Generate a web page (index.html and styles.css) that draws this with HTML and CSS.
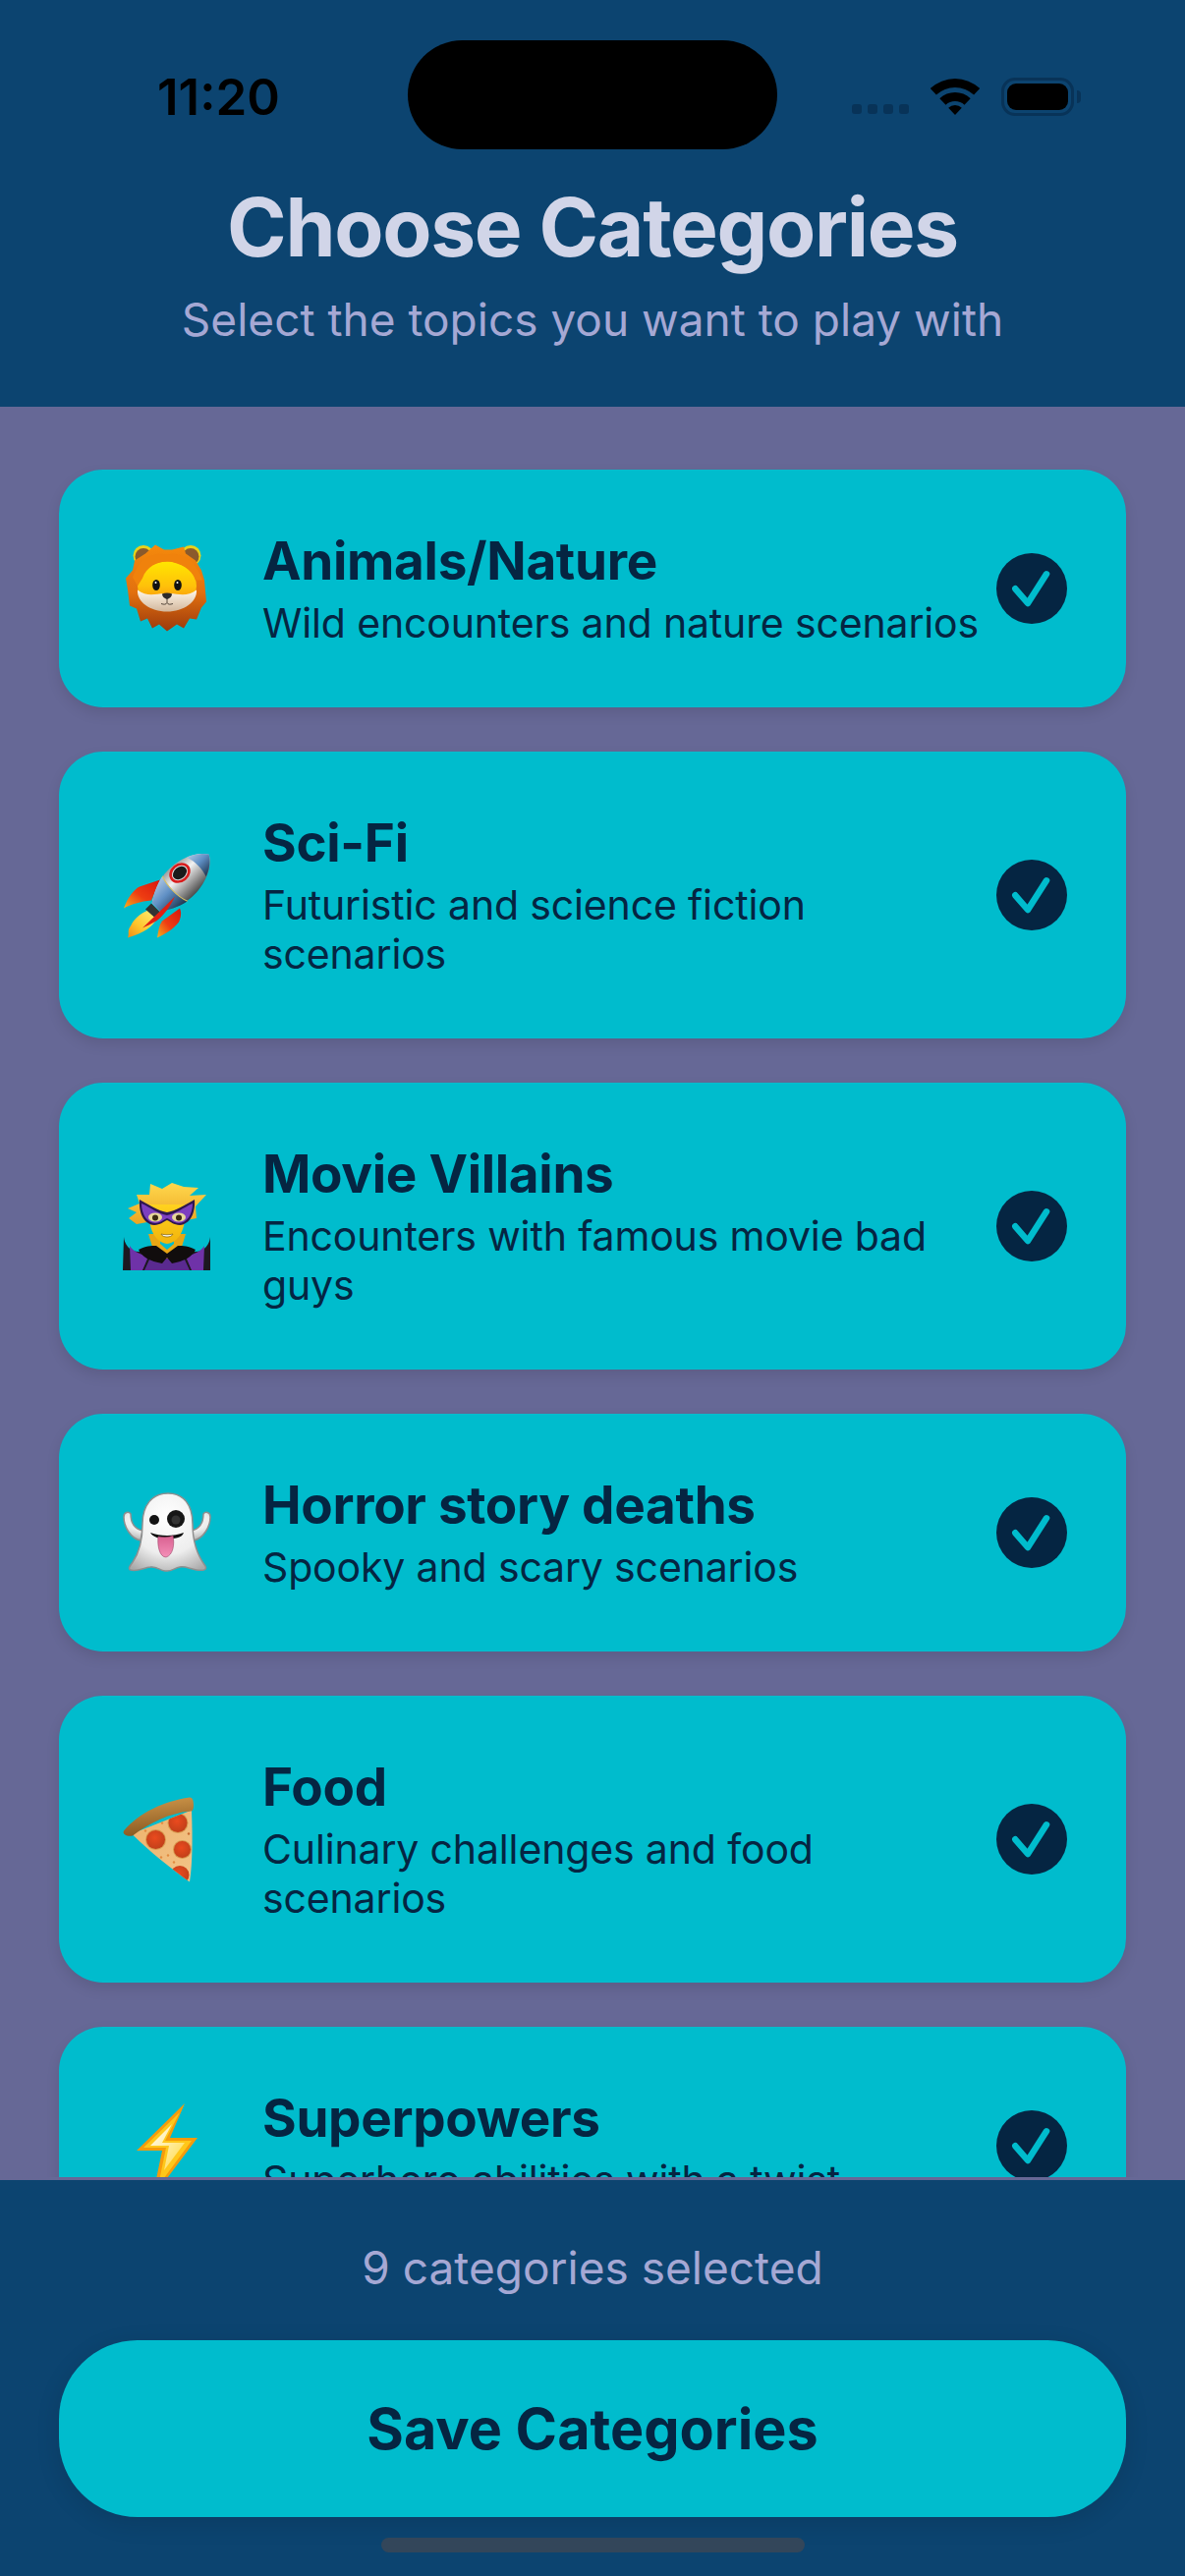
FILE: index.html
```html
<!DOCTYPE html>
<html lang="en">
  <head>
    <meta charset="UTF-8" />
    <meta name="viewport" content="width=device-width, initial-scale=1.0" />
    <title>Choose Categories</title>
    <link rel="stylesheet" href="styles.css">
  </head>
  <body>
    <div class="screen">
      <header class="top">
        <div class="island"></div>
        <div class="status">
          <span class="time">11:20</span>
          <div class="status-icons">
            <div class="signal"><i></i><i></i><i></i><i></i></div>
            <svg class="wifi" width="50" height="37" viewBox="0 0 50 37">
              <path d="M-.2 10A37 37 0 0 1 50.2 10L44.1 16.5A28 28 0 0 0 5.9 16.5Z" />
              <path d="M9.3 20.2A23 23 0 0 1 40.7 20.2L34.5 26.8A14 14 0 0 0 15.5 26.8Z" />
              <path d="M18.2 29.7A10 10 0 0 1 31.8 29.7L25 37Z" />
            </svg>
            <div class="battery"><div class="battery-fill"></div></div>
            <div class="battery-nub"></div>
          </div>
        </div>
        <h1 class="title">Choose Categories</h1>
        <p class="subtitle">Select the topics you want to play with</p>
      </header>

      <main class="list">
        <div class="card">
          <div class="emoji">
            <svg width="110" height="110" viewBox="0 3.5 110 110">
              <defs>
                <linearGradient id="maneG" x1="0" y1="0" x2="0" y2="1">
                  <stop offset="0" stop-color="#f58a0c" />
                  <stop offset=".55" stop-color="#e2700f" />
                  <stop offset="1" stop-color="#9c3a0c" />
                </linearGradient>
                <linearGradient id="faceG" x1="0" y1="0" x2="0" y2="1">
                  <stop offset="0" stop-color="#ffe600" />
                  <stop offset=".5" stop-color="#ffc10a" />
                  <stop offset="1" stop-color="#f57f0e" />
                </linearGradient>
                <linearGradient id="muzzleG" x1="0" y1="0" x2="0" y2="1">
                  <stop offset="0" stop-color="#fff7ea" />
                  <stop offset="1" stop-color="#d2b79c" />
                </linearGradient>
              </defs>
              <circle cx="31" cy="25" r="10.5" fill="#e9d21a" />
              <circle cx="79" cy="25" r="10.5" fill="#e9d21a" />
              <circle cx="31" cy="26" r="8.5" fill="#8a5a2c" />
              <circle cx="79" cy="26" r="8.5" fill="#8a5a2c" />
              <path fill="url(#maneG)" d="M55 102L47 95L40 99L35 89L28 92L24 79L17 76L15 60L13 48L20 40L22 30L33 23L43 14L52 19L60 19L72 16L74 23L84 30L90 40L93 50L95 72L90 78L85 90L78 89L72 99L65 95Z" />
              <ellipse cx="55" cy="56" rx="30" ry="25" fill="url(#faceG)" />
              <path fill="#f0820c" d="M20 47C27 27 42 21 55 24C68 20 85 30 91 50L84 50C80 38 68 33 58 31C48 30 34 35 30 48L25 56Z" />
              <path fill="url(#muzzleG)" d="M25 60C35 68 45 63 55 64C65 63 75 68 85 60C86 72 72 82 55 82C38 82 24 72 25 60Z" />
              <ellipse cx="44" cy="55" rx="3.8" ry="5.5" fill="#111" />
              <ellipse cx="66" cy="55" rx="3.8" ry="5.5" fill="#111" />
              <circle cx="43.5" cy="52.5" r="1" fill="#fff" />
              <circle cx="65.5" cy="52.5" r="1" fill="#fff" />
              <path fill="#2c2a2a" d="M50 64C53 62.5 57 62.5 60 64C60 67 57 69 55 69.5C53 69 50 67 50 64Z" />
              <path fill="none" stroke="#55483c" stroke-width="1" d="M55 69.5V73M49 74C52 75 54 75 55 73C56 75 58 75 61 74" />
            </svg>
          </div>
          <div class="card-text">
            <h3 class="card-title">Animals/Nature</h3>
            <p class="card-desc">Wild encounters and nature scenarios</p>
          </div>
          <div class="check"><svg width="72" height="72" viewBox="0 0 72 72"><polyline points="19.3,36.3 32,51 51,21.3" /></svg></div>
        </div>

        <div class="card">
          <div class="emoji">
            <svg width="110" height="110" viewBox="0 -5.5 110 110">
              <defs>
                <linearGradient id="finG" x1="0" y1="1" x2="1" y2="0">
                  <stop offset="0" stop-color="#f6b21c" />
                  <stop offset=".45" stop-color="#ee3d12" />
                  <stop offset="1" stop-color="#d8160e" />
                </linearGradient>
                <linearGradient id="bodyG" x1="0" y1="0" x2="1" y2="0">
                  <stop offset="0" stop-color="#9e9e9e" />
                  <stop offset=".35" stop-color="#f2f2f2" />
                  <stop offset=".7" stop-color="#9a9a9a" />
                  <stop offset="1" stop-color="#4c4c4c" />
                </linearGradient>
                <linearGradient id="blueG" x1="0" y1="0" x2="1" y2="0">
                  <stop offset="0" stop-color="#a9c4e2" />
                  <stop offset=".45" stop-color="#5f8fc4" />
                  <stop offset="1" stop-color="#1f3550" />
                </linearGradient>
                <linearGradient id="flameG" x1="1" y1="0" x2="0" y2="1">
                  <stop offset="0" stop-color="#fff07a" />
                  <stop offset=".6" stop-color="#fdc52c" />
                  <stop offset="1" stop-color="#f08a14" />
                </linearGradient>
              </defs>
              <path fill="url(#finG)" d="M11 63C15 52 21 44 27 41L48 34L39 55C28 56 18 59 11 63Z" />
              <path fill="url(#flameG)" d="M36 65L45 73C40 82 32 88 15 93C17 88 14 86 18 81C21 74 28 68 36 65Z" />
              <path fill="#333" d="M33 64L39 58L48 67L42 72Z" />
              <g transform="translate(68 38) rotate(45)">
                <path fill="url(#bodyG)" d="M0-42C14-34 20-12 18 4C16 18 10 28 6 34H-6C-10 28-16 18-18 4C-20-12-14-34 0-42Z" />
                <path fill="url(#blueG)" d="M0-42C6-38 11-32 13.8-24C5-27-5-27-13.800-24C-11-32-6-38 0-42Z" />
                <path fill="url(#blueG)" d="M-18 7C-8 11 8 11 18 7C16 18 10 28 6 34H-6C-10 28-16 18-18 7Z" />
                <path fill="none" stroke="#d8c060" stroke-width="1" d="M-18 7C-8 11 8 11 18 7" />
              </g>
              <ellipse cx="68" cy="27" rx="11.500" ry="9.500" fill="#d91c1c" transform="rotate(-40 68 27)" />
              <ellipse cx="68" cy="27" rx="8.800" ry="6.800" fill="#dfe2e4" transform="rotate(-40 68 27)" />
              <ellipse cx="68" cy="27" rx="7.800" ry="5.800" fill="#1a1a1a" transform="rotate(-40 68 27)" />
              <path fill="url(#finG)" d="M45 93C46 86 47 80 50 76L68 63C70 68 69 72 67 77C61 85 53 89 45 93Z" />
              <path fill="#e01f12" d="M30 83L52 62L63 51C58 62 50 72 44 76C39 79 34 81 30 83Z" />
            </svg>
          </div>
          <div class="card-text">
            <h3 class="card-title">Sci-Fi</h3>
            <p class="card-desc">Futuristic and science fiction scenarios</p>
          </div>
          <div class="check"><svg width="72" height="72" viewBox="0 0 72 72"><polyline points="19.3,36.3 32,51 51,21.3" /></svg></div>
        </div>

        <div class="card">
          <div class="emoji">
            <svg width="110" height="110" viewBox="0 -3 110 110">
              <defs>
                <linearGradient id="hairG" x1="0" y1="0" x2="0" y2="1">
                  <stop offset="0" stop-color="#ffd84d" />
                  <stop offset="1" stop-color="#eca521" />
                </linearGradient>
                <linearGradient id="skinG" x1="0" y1="0" x2="0" y2="1">
                  <stop offset="0" stop-color="#ffd21f" />
                  <stop offset="1" stop-color="#f2b40c" />
                </linearGradient>
              </defs>
              <path fill="#1c1820" d="M11 63C12 72 18 78 26 78L84 78C92 78 98 72 99 63L99 97H10Z" />
              <path fill="#6f32a8" d="M17 72C21 78 28 81 36 83L30 97H18ZM93 72C89 78 82 81 74 83L80 97H92Z" />
              <path fill="#5a2a90" d="M32 97L38 84H72L78 97Z" />
              <path fill="url(#hairG)" d="M15 34L27 29L24 20L37 20L38 9L50 14L60 8L72 12L87 13L78 21L95 20L84 32L85 44L75 46L35 48L24 50L16 44L24 38Z" />
              <path fill="#e8a614" d="M36 60H48V70L55 76L62 70V60H74L70 73L82 78L55 85L28 78L40 73Z" />
              <path fill="url(#skinG)" d="M37 30H73C75 50 70 68 55 70C40 68 35 50 37 30Z" />
              <path fill="#110d0d" d="M26 76C33 72 39 72 44 72L55 80L66 72C71 72 77 72 84 76C81 83 72 88 60 90L55 84L50 90C38 88 29 83 26 76Z" />
              <path fill="#2e1650" d="M27 25C36 30 47 37 55 38C63 37 74 30 83 25C84 38 79 50 68 51C62 51 58 47 55 46C52 47 48 51 42 51C31 50 26 38 27 25Z" />
              <path fill="#7d3fc0" d="M29 29C38 33 47 40 55 41C63 40 72 33 81 29C81 40 75 49 67 49C62 49 58 45 55 44C52 45 48 49 43 49C35 49 29 40 29 29Z" />
              <ellipse cx="43" cy="43" rx="7" ry="4.500" fill="#e8d89a" />
              <ellipse cx="67" cy="43" rx="7" ry="4.500" fill="#e8d89a" />
              <circle cx="43" cy="43.500" r="3" fill="#3a2a10" />
              <circle cx="67" cy="43.500" r="3" fill="#3a2a10" />
              <path fill="#fff" stroke="#8c6a10" stroke-width=".8" d="M49 60C53 61 57 61 61 60C60 64 50 64 49 60Z" />
            </svg>
          </div>
          <div class="card-text">
            <h3 class="card-title">Movie Villains</h3>
            <p class="card-desc">Encounters with famous movie bad guys</p>
          </div>
          <div class="check"><svg width="72" height="72" viewBox="0 0 72 72"><polyline points="19.3,36.3 32,51 51,21.3" /></svg></div>
        </div>

        <div class="card">
          <div class="emoji">
            <svg width="110" height="110" viewBox="0 -1 110 110">
              <defs>
                <radialGradient id="ghostG" cx=".5" cy=".3" r=".8">
                  <stop offset="0" stop-color="#ffffff" />
                  <stop offset=".6" stop-color="#eeeeee" />
                  <stop offset="1" stop-color="#a9a9a9" />
                </radialGradient>
                <linearGradient id="tongueG" x1="0" y1="0" x2="0" y2="1">
                  <stop offset="0" stop-color="#d85f90" />
                  <stop offset="1" stop-color="#f490b8" />
                </linearGradient>
              </defs>
              <path fill="url(#ghostG)" stroke="#8f8f8f" stroke-width="1.500" d="M30 52C22 50 18 44 18 35C16 32 11 33 11 38C11 48 18 60 28 62ZM80 52C88 50 92 44 92 35C94 32 99 33 99 38C99 48 92 60 82 62Z" />
              <path fill="url(#ghostG)" stroke="#8f8f8f" stroke-width="1.500" d="M56 14C72 14 81 26 81 45C81 66 88 80 94 88C96 92 92 93 85 92C78 91 74 88 68 89C62 90 60 94 53 93C47 92 44 88 38 89C31 90 24 94 18 92C15 91 17 88 20 84C27 74 30 62 30 45C30 26 40 14 56 14Z" />
              <circle cx="42" cy="41" r="5" fill="#111" />
              <circle cx="64" cy="40" r="9" fill="#161616" />
              <circle cx="64" cy="41" r="4.500" fill="#333" />
              <path fill="#0d0d0d" d="M38 54C48 58 62 58 72 54C70 60 62 60 55 60C47 60 41 59 38 54Z" />
              <path fill="url(#tongueG)" stroke="#9c4468" stroke-width=".6" d="M46 58C51 59 57 59 61 57C63 66 61 77 54 79C47 79 45 66 46 58Z" />
            </svg>
          </div>
          <div class="card-text">
            <h3 class="card-title">Horror story deaths</h3>
            <p class="card-desc">Spooky and scary scenarios</p>
          </div>
          <div class="check"><svg width="72" height="72" viewBox="0 0 72 72"><polyline points="19.3,36.3 32,51 51,21.3" /></svg></div>
        </div>

        <div class="card">
          <div class="emoji">
            <svg width="110" height="110" viewBox="0 -3.500 110 110">
              <defs>
                <linearGradient id="crustG" x1="0" y1="0" x2=".2" y2="1">
                  <stop offset="0" stop-color="#d39a4c" />
                  <stop offset="1" stop-color="#8a5a22" />
                </linearGradient>
                <linearGradient id="cheeseG" x1="0" y1="0" x2="1" y2="1">
                  <stop offset="0" stop-color="#eeb26c" />
                  <stop offset="1" stop-color="#f2c488" />
                </linearGradient>
                <radialGradient id="pepG" cx=".45" cy=".4" r=".6">
                  <stop offset="0" stop-color="#ea4a1e" />
                  <stop offset="1" stop-color="#c2401a" />
                </radialGradient>
                <clipPath id="sliceClip">
                  <path d="M19 46L80 22C81 50 81 75 78 95C60 82 38 65 19 46Z" />
                </clipPath>
              </defs>
              <path fill="url(#cheeseG)" d="M19 46L80 22C81 50 81 75 78 95C60 82 38 65 19 46Z" />
              <g clip-path="url(#sliceClip)">
                <circle cx="66" cy="35" r="10.500" fill="#d99a50" />
                <circle cx="66" cy="35" r="9.500" fill="url(#pepG)" />
                <circle cx="43.500" cy="52" r="10.500" fill="#d99a50" />
                <circle cx="43.500" cy="52" r="9.500" fill="url(#pepG)" />
                <circle cx="70.500" cy="62" r="9.500" fill="#d99a50" />
                <circle cx="70.500" cy="62" r="8.500" fill="url(#pepG)" />
                <circle cx="68" cy="88" r="9.500" fill="url(#pepG)" />
                <circle cx="50" cy="35" r="1.200" fill="#e08a40" />
                <circle cx="33" cy="43" r="1.200" fill="#e08a40" />
                <circle cx="56" cy="68" r="1.200" fill="#e08a40" />
                <circle cx="49" cy="70" r="1.200" fill="#e08a40" />
                <circle cx="62" cy="75" r="1.200" fill="#e08a40" />
                <circle cx="77" cy="46" r="1.200" fill="#c86a30" />
              </g>
              <path fill="url(#crustG)" d="M11 43C27 24 52 13 78 9C81 9 82 12 82 17C82 21 81 23 79 23C57 25 37 35 20 48C15 49 9 47 11 43Z" />
            </svg>
          </div>
          <div class="card-text">
            <h3 class="card-title">Food</h3>
            <p class="card-desc">Culinary challenges and food scenarios</p>
          </div>
          <div class="check"><svg width="72" height="72" viewBox="0 0 72 72"><polyline points="19.3,36.3 32,51 51,21.3" /></svg></div>
        </div>

        <div class="card">
          <div class="emoji">
            <svg width="110" height="110" viewBox="0 0 110 110">
              <defs>
                <linearGradient id="boltG" x1="0" y1="0" x2="1" y2="1">
                  <stop offset="0" stop-color="#ffffff" />
                  <stop offset="1" stop-color="#ffd83a" />
                </linearGradient>
              </defs>
              <path fill="#f59b0c" d="M73 12L24 60H50L40 108L86 47H58Z" />
              <path fill="#ffc71a" d="M68 21L31 57H54L46 96L80 50H53Z" />
              <path fill="url(#boltG)" d="M60 33L38 55H57L52 80L73 52H50Z" />
            </svg>
          </div>
          <div class="card-text">
            <h3 class="card-title">Superpowers</h3>
            <p class="card-desc">Superhero abilities with a twist</p>
          </div>
          <div class="check"><svg width="72" height="72" viewBox="0 0 72 72"><polyline points="19.3,36.3 32,51 51,21.3" /></svg></div>
        </div>
      </main>

      <footer class="bottom">
        <p class="count">9 categories selected</p>
        <button class="save">Save Categories</button>
        <div class="home-bar"></div>
      </footer>
    </div>
  </body>
</html>
```

FILE: styles.css
```css
* {
  box-sizing: border-box;
}
body {
  margin: 0;
  font-family: "Inter", "Liberation Sans", sans-serif;
  background-color: #666896;
}
.screen {
  display: flex;
  flex-direction: column;
  height: 2622px;
  overflow: hidden;
  background-color: #666896;
}
.top {
  position: relative;
  height: 414px;
  padding-top: 72px;
  background-color: #0c4470;
  text-align: center;
}
.island {
  position: absolute;
  top: 41px;
  left: 415px;
  width: 376px;
  height: 111px;
  border-radius: 56px;
  background-color: #000;
}
.status {
  display: flex;
  justify-content: space-between;
  align-items: center;
  height: 52px;
  padding: 0 106px 0 160px;
}
.time {
  font-size: 51px;
  font-weight: 600;
  color: #000;
}
.status-icons {
  display: flex;
  align-items: flex-end;
  height: 40px;
}
.signal {
  display: flex;
  gap: 6px;
  margin-right: 22px;
  margin-bottom: 2px;
}
.signal i {
  width: 10px;
  height: 10px;
  border-radius: 3px;
  background-color: #083358;
}
.wifi {
  margin-right: 22px;
  margin-bottom: 1px;
}
.wifi path {
  fill: #000;
}
.battery {
  width: 74px;
  height: 39px;
  padding: 3px;
  border: 3px solid #083358;
  border-radius: 14px;
}
.battery-fill {
  height: 100%;
  border-radius: 9px;
  background-color: #000;
}
.battery-nub {
  width: 4px;
  height: 13px;
  margin: 0 0 13px 3px;
  border-radius: 0 6px 6px 0;
  background-color: #083358;
}
.title {
  margin: 58px 0 0;
  font-size: 82px;
  line-height: 100px;
  font-weight: 700;
  letter-spacing: -1.3px;
  color: #d1d5e8;
}
.subtitle {
  margin: 13px 0 0;
  font-size: 46px;
  line-height: 60px;
  font-weight: 400;
  color: #a5a8d4;
}
.list {
  display: flex;
  flex-direction: column;
  gap: 45px;
  height: 1802px;
  padding: 64px 60px 0;
  overflow: hidden;
  flex: none;
}
.card {
  display: flex;
  flex: none;
  align-items: center;
  padding: 60px 60px 61px;
  border-radius: 45px;
  background-color: #00bccd;
  box-shadow: 0 6px 14px rgba(0, 0, 0, 0.1);
}
.emoji {
  flex: none;
  width: 110px;
  height: 110px;
  margin-left: -5px;
  margin-right: 42px;
}
.emoji svg {
  display: block;
}
.card-text {
  flex: 1;
}
.card-title {
  margin: 0 0 5px;
  font-size: 53px;
  line-height: 66px;
  font-weight: 700;
  letter-spacing: -0.3px;
  color: #052542;
}
.card-desc {
  margin: 0;
  font-size: 41px;
  line-height: 50px;
  letter-spacing: -0.15px;
  color: #052542;
}
.check {
  flex: none;
  width: 72px;
  height: 72px;
  border-radius: 50%;
  background-color: #052542;
}
.check svg {
  display: block;
}
.check polyline {
  fill: none;
  stroke: #00bccd;
  stroke-width: 6.5;
  stroke-linecap: round;
  stroke-linejoin: round;
}
.bottom {
  flex: 1;
  margin-top: 3px;
  padding: 59px 60px 0;
  background-color: #0c4470;
  text-align: center;
}
.count {
  margin: 0 0 44px;
  font-size: 46px;
  line-height: 60px;
  color: #a5a8d4;
}
.save {
  display: block;
  width: 100%;
  height: 180px;
  border: none;
  border-radius: 80px;
  background-color: #00bccd;
  box-shadow: 0 6px 24px rgba(0, 0, 0, 0.12);
  font-family: inherit;
  font-size: 57.5px;
  font-weight: 700;
  color: #052542;
}
.home-bar {
  width: 431px;
  height: 15px;
  margin: 21px auto 0;
  border-radius: 8px;
  background-color: #33465a;
}
```
